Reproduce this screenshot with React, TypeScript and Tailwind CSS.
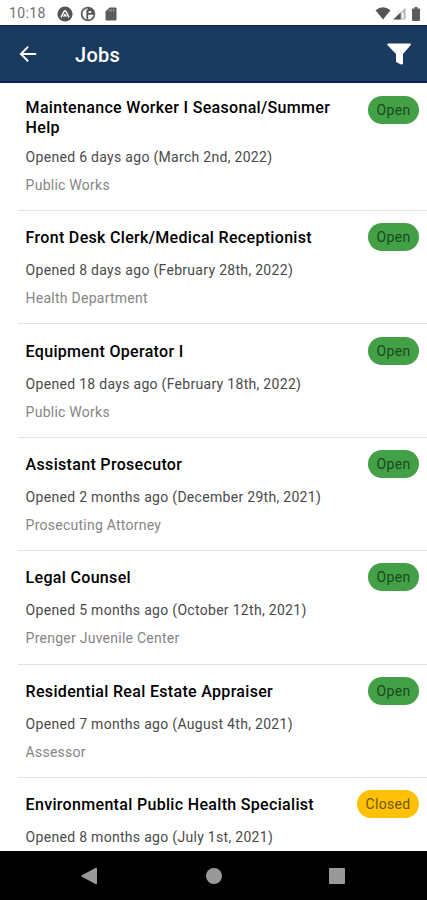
import React from 'react';

type Job = {
  title: string;
  opened: string;
  department?: string;
  status: 'Open' | 'Closed';
};

const jobs: Job[] = [
  {
    title: 'Maintenance Worker I Seasonal/Summer Help',
    opened: 'Opened 6 days ago (March 2nd, 2022)',
    department: 'Public Works',
    status: 'Open',
  },
  {
    title: 'Front Desk Clerk/Medical Receptionist',
    opened: 'Opened 8 days ago (February 28th, 2022)',
    department: 'Health Department',
    status: 'Open',
  },
  {
    title: 'Equipment Operator I',
    opened: 'Opened 18 days ago (February 18th, 2022)',
    department: 'Public Works',
    status: 'Open',
  },
  {
    title: 'Assistant Prosecutor',
    opened: 'Opened 2 months ago (December 29th, 2021)',
    department: 'Prosecuting Attorney',
    status: 'Open',
  },
  {
    title: 'Legal Counsel',
    opened: 'Opened 5 months ago (October 12th, 2021)',
    department: 'Prenger Juvenile Center',
    status: 'Open',
  },
  {
    title: 'Residential Real Estate Appraiser',
    opened: 'Opened 7 months ago (August 4th, 2021)',
    department: 'Assessor',
    status: 'Open',
  },
  {
    title: 'Environmental Public Health Specialist',
    opened: 'Opened 8 months ago (July 1st, 2021)',
    status: 'Closed',
  },
];

function StatusBar() {
  return (
    <div className="flex h-[25px] shrink-0 items-center justify-between bg-white pl-[9px] pr-[7px] pt-[2px] text-[#707070]">
      <div className="flex items-center">
        <span className="w-[48px] text-[14px] tracking-[0.4px]">10:18</span>
        <svg className="h-4 w-4" viewBox="0 0 16 16">
          <circle cx="8" cy="8" r="7.6" fill="#555" />
          <path d="M4 11.4 7.2 5.2Q8 4 8.8 5.2L12 11.4M6.6 10.6 8 8.6 9.4 10.6" fill="none" stroke="#fff" strokeWidth="1.4" />
        </svg>
        <svg className="ml-[7px] h-4 w-4" viewBox="0 0 16 16">
          <circle cx="8" cy="8" r="6.4" fill="#fff" stroke="#606060" strokeWidth="1.8" />
          <path d="M6.4 3.6H8.2V13.6H6.4zM8 1.8A6.4 6.4 0 0 1 14.4 8.8H8z" fill="#555" />
          <path d="M8.6 5.2h2.6v1.8H8.6z" fill="#fff" />
        </svg>
        <svg className="ml-[9px] h-4 w-3" viewBox="0 0 12 16">
          <path d="M4.5 1.5H10.5a1 1 0 0 1 1 1V13.5a1 1 0 0 1-1 1H1.5a1 1 0 0 1-1-1V5.5z" fill="#5c5c5c" />
          <path d="M4.2 3.6v2M6.4 3.2v2.4M8.6 3.2v2.4" stroke="#aaa" strokeWidth="1" />
        </svg>
      </div>
      <div className="flex items-center">
        <svg className="h-[13px] w-4" viewBox="0 0 16 13">
          <path d="M.5 3.2Q8-2.6 15.5 3.2L8 12.6z" fill="#555" />
        </svg>
        <svg className="ml-[2px] h-[13px] w-[13px]" viewBox="0 0 13 13">
          <path d="M.4 12.6 12.6.4V12.6z" fill="#b8b8b8" />
          <path d="M.4 12.6 7.6 5.4V12.6z" fill="#555" />
          <path d="M8.8 5.5h1.8v5.8H8.8z" fill="#fff" />
        </svg>
        <svg className="ml-[6px] h-[14px] w-[8px]" viewBox="0 0 8 14">
          <path d="M2.5 0h3v1.5H7a1 1 0 0 1 1 1V13a1 1 0 0 1-1 1H1a1 1 0 0 1-1-1V2.5a1 1 0 0 1 1-1h1.5z" fill="#5c5c5c" />
        </svg>
      </div>
    </div>
  );
}

function Header() {
  return (
    <header className="flex h-[58px] shrink-0 items-center border-b-2 border-t border-b-[#10205a] border-t-[#0b2b50] bg-[#1a3a5f] pl-[19px] pr-[15px] pt-px text-white">
      <svg className="h-[18px] w-[18px]" viewBox="0 0 18 18" fill="none" stroke="currentColor" strokeWidth="2">
        <path d="M17.2 9H2.2M9.2 1.6 1.9 9 9.2 16.4" />
      </svg>
      <h1 className="ml-[38px] mt-px text-[20px] font-medium tracking-[0.3px]">Jobs</h1>
      <svg className="ml-auto h-6 w-[26px]" viewBox="0 0 26 24" fill="currentColor">
        <path d="M2 1.4H24.2Q25.6 1.8 24.6 3.2L17 12V21.2Q16.6 23 15 22.4L11 20.5Q10 20 10 19V12L1.6 3.2Q.6 1.8 2 1.4z" />
      </svg>
    </header>
  );
}

function StatusBadge({ status }: { status: Job['status'] }) {
  const color = status === 'Open' ? 'w-[51px] bg-[#43a047] text-[#184a1c]' : 'w-[62px] bg-[#ffc107] text-[#735500]';
  return (
    <span className={`-mt-[2px] flex h-7 shrink-0 items-center justify-center rounded-full pt-px text-[14px] tracking-[0.3px] ${color}`}>
      {status}
    </span>
  );
}

function JobRow({ job }: { job: Job }) {
  return (
    <li className="ml-[18px] shrink-0 border-b border-[#e2e2e2] pb-[15.1px] pl-[7.6px] pr-[8px] pt-[14.3px] last:border-0">
      <div className="flex items-start justify-between">
        <div className="flex min-h-[26px] w-[320px] items-center">
          <h2 className="text-[16px] font-medium leading-5 tracking-[0.32px] text-black">{job.title}</h2>
        </div>
        <div className="flex h-[26px] items-start">
          <StatusBadge status={job.status} />
        </div>
      </div>
      <p className="mt-[9px] text-[14px] leading-5 tracking-[0.3px] text-[#4a4a4a]">{job.opened}</p>
      {job.department && (
        <p className="mt-2 text-[14px] leading-5 tracking-[0.25px] text-[#858585]">{job.department}</p>
      )}
    </li>
  );
}

function NavBar() {
  return (
    <nav className="flex h-[49px] shrink-0 items-center bg-black pl-[81px] text-[#999]">
      <svg className="h-[18px] w-[17px]" viewBox="0 0 17 18" fill="currentColor">
        <path d="M15 .8Q16 .4 16 1.5V16.5Q16 17.6 15 17.2L.8 9.7Q0 9 .8 8.3z" />
      </svg>
      <div className="ml-[108px] h-4 w-4 rounded-full bg-[#999]" />
      <div className="ml-[107px] h-4 w-4 rounded-[1px] bg-[#999]" />
    </nav>
  );
}

function App() {
  return (
    <div className="flex h-[900px] w-[427px] flex-col overflow-hidden bg-white font-['Roboto',sans-serif]">
      <StatusBar />
      <Header />
      <ul className="flex min-h-0 flex-1 flex-col overflow-hidden pt-[0.6px]">
        {jobs.map((job) => (
          <JobRow key={job.title} job={job} />
        ))}
      </ul>
      <NavBar />
    </div>
  );
}

export default App;
